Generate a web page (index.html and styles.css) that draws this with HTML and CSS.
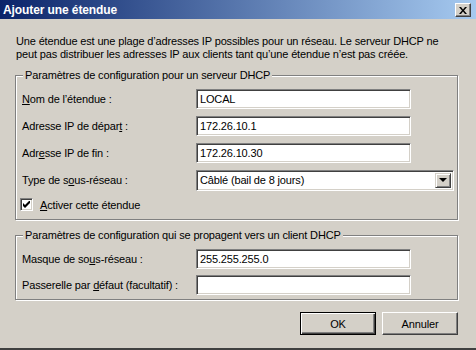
FILE: index.html
```html
<!DOCTYPE html>
<html lang="fr">
<head>
  <meta charset="UTF-8" />
  <title>Ajouter une étendue</title>
  <link rel="stylesheet" href="styles.css">
</head>
<body>
  <div class="window">
    <!-- Title bar -->
    <div class="titlebar">
      <span class="title">Ajouter une étendue</span>
      <button class="close" aria-label="Fermer">
        <svg width="8" height="7" viewBox="0 0 8 7">
          <path d="M0 0h2l2 2.5L6 0h2L5 3.5 8 7H6L4 4.5 2 7H0l3-3.5z" fill="#000"/>
        </svg>
      </button>
    </div>

    <div class="content">
      <p class="intro">Une étendue est une plage d’adresses IP possibles pour un réseau. Le serveur DHCP ne peut pas distribuer les adresses IP aux clients tant qu’une étendue n’est pas créée.</p>

      <!-- Server settings -->
      <div class="group first">
        <span class="legend">Paramètres de configuration pour un serveur DHCP</span>
        <div class="row">
          <label><u>N</u>om de l’étendue :</label>
          <div class="field">LOCAL</div>
        </div>
        <div class="row">
          <label>Adresse IP de dépar<u>t</u> :</label>
          <div class="field">172.26.10.1</div>
        </div>
        <div class="row">
          <label>Adr<u>e</u>sse IP de fin :</label>
          <div class="field">172.26.10.30</div>
        </div>
        <div class="row">
          <label>Type de s<u>o</u>us-réseau :</label>
          <div class="combo">
            <span>Câblé (bail de 8 jours)</span>
            <span class="drop"><i class="arrow"></i></span>
          </div>
        </div>
        <div class="check-row">
          <span class="checkbox">
            <svg width="7" height="7" viewBox="0 0 7 7">
              <path d="M0 2v3l2 2 5-5V-1L2 4z" fill="#000"/>
            </svg>
          </span>
          <span><u>A</u>ctiver cette étendue</span>
        </div>
      </div>

      <!-- Client settings -->
      <div class="group second">
        <span class="legend">Paramètres de configuration qui se propagent vers un client DHCP</span>
        <div class="row">
          <label>Masque de so<u>u</u>s-réseau :</label>
          <div class="field">255.255.255.0</div>
        </div>
        <div class="row">
          <label>Passerelle par <u>d</u>éfaut (facultatif) :</label>
          <div class="field"></div>
        </div>
      </div>

      <div class="buttons">
        <button class="btn default">OK</button>
        <button class="btn">Annuler</button>
      </div>
    </div>
  </div>
</body>
</html>
```

FILE: styles.css
```css
body {
  margin: 0;
  padding: 0;
  background: #d4d0c8;
  font-family: 'Liberation Sans', Arial, sans-serif;
  font-size: 11px;
  letter-spacing: -0.15px;
  color: #000;
}
.window {
  width: 476px;
  height: 350px;
  box-sizing: border-box;
  background: #d4d0c8;
  border-bottom: 2px solid #404040;
  overflow: hidden;
}
.titlebar {
  height: 19px;
  display: flex;
  align-items: center;
  justify-content: space-between;
  padding: 0 5px 0 3px;
  background: linear-gradient(to right, #0a246a, #a6caf0);
}
.title {
  color: #fff;
  font-weight: bold;
  font-size: 12px;
  letter-spacing: -0.1px;
}
.close {
  width: 16px;
  height: 14px;
  padding: 0;
  margin-top: 1px;
  background: #d4d0c8;
  border: 1px solid;
  border-color: #fff #404040 #404040 #fff;
  box-shadow: inset -1px -1px 0 #808080;
  display: flex;
  align-items: center;
  justify-content: center;
}
.content {
  padding: 0 0 0 15px;
}
.intro {
  margin: 16px 0 0 1px;
  width: 440px;
  line-height: 13px;
}

/* Etched group boxes */
.group {
  position: relative;
  width: 443px;
  box-sizing: border-box;
  border: 1px solid #808080;
  box-shadow: 1px 1px 0 #fff, inset 1px 1px 0 #fff;
  padding: 0 0 0 6px;
}
.group.first {
  margin-top: 14px;
  height: 145px;
  padding-top: 13px;
}
.group.second {
  margin-top: 15px;
  height: 65px;
  padding-top: 13px;
}
.legend {
  position: absolute;
  left: 7px;
  top: -7px;
  padding: 0 2px;
  background: #d4d0c8;
  line-height: 13px;
}
.row {
  display: flex;
  align-items: center;
  height: 20px;
  margin-bottom: 7px;
}
.second .row {
  margin-bottom: 6px;
}
.row label {
  width: 174px;
  flex-shrink: 0;
}
.field {
  width: 215px;
  height: 20px;
  box-sizing: border-box;
  background: #fff;
  border: 1px solid;
  border-color: #808080 #fff #fff #808080;
  box-shadow: inset 1px 1px 0 #404040, inset -1px -1px 0 #d4d0c8;
  padding: 0 3px;
  line-height: 18px;
  white-space: nowrap;
}

/* Combo box */
.combo {
  width: 258px;
  height: 21px;
  box-sizing: border-box;
  background: #fff;
  border: 1px solid;
  border-color: #808080 #fff #fff #808080;
  box-shadow: inset 1px 1px 0 #404040, inset -1px -1px 0 #d4d0c8;
  display: flex;
  align-items: center;
  justify-content: space-between;
  padding: 2px 2px 2px 3px;
}
.drop {
  width: 16px;
  height: 15px;
  box-sizing: border-box;
  background: #d4d0c8;
  border: 1px solid;
  border-color: #d4d0c8 #404040 #404040 #d4d0c8;
  box-shadow: inset 1px 1px 0 #fff, inset -1px -1px 0 #808080;
  display: flex;
  align-items: center;
  justify-content: center;
}
.arrow {
  width: 0;
  height: 0;
  border-left: 4px solid transparent;
  border-right: 4px solid transparent;
  border-top: 4px solid #000;
}

/* Checkbox */
.check-row {
  display: flex;
  align-items: center;
  gap: 7px;
  margin-left: -2px;
  margin-top: 8px;
}
.checkbox {
  width: 13px;
  height: 13px;
  box-sizing: border-box;
  background: #fff;
  border: 1px solid;
  border-color: #808080 #fff #fff #808080;
  box-shadow: inset 1px 1px 0 #404040, inset -1px -1px 0 #d4d0c8;
  display: flex;
  align-items: center;
  justify-content: center;
}

/* Dialog buttons */
.buttons {
  width: 443px;
  display: flex;
  justify-content: flex-end;
  gap: 6px;
  margin-top: 12px;
}
.btn {
  width: 76px;
  height: 23px;
  font-family: inherit;
  font-size: 11px;
  letter-spacing: inherit;
  color: #000;
  background: #d4d0c8;
  border: 1px solid;
  border-color: #fff #404040 #404040 #fff;
  box-shadow: inset -1px -1px 0 #808080;
  padding: 0;
}
.btn.default {
  border-color: #000;
  box-shadow: inset 1px 1px 0 #fff, inset -1px -1px 0 #404040, inset -2px -2px 0 #808080;
}
u {
  text-decoration: underline;
  text-underline-offset: 1px;
}
```
